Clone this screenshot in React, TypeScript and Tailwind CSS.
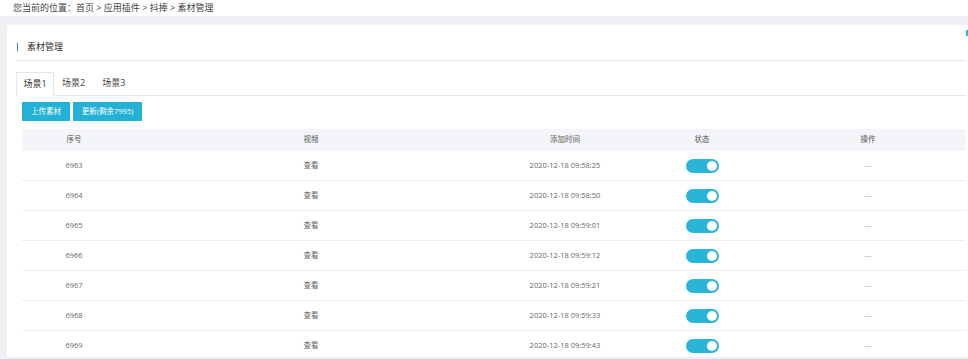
import React from 'react';

const rows = [
  { id: 6963, time: '2020-12-18 09:58:25' },
  { id: 6964, time: '2020-12-18 09:58:50' },
  { id: 6965, time: '2020-12-18 09:59:01' },
  { id: 6966, time: '2020-12-18 09:59:12' },
  { id: 6967, time: '2020-12-18 09:59:21' },
  { id: 6968, time: '2020-12-18 09:59:33' },
  { id: 6969, time: '2020-12-18 09:59:43' },
];

const cols = 'grid grid-cols-[104px_370px_138px_136px_1fr] items-center text-center';

const Toggle: React.FC = () => (
  <span className="inline-flex items-center justify-end w-[33px] h-[14px] rounded-full bg-[#29b5d8] pr-[2px]">
    <span className="w-[10px] h-[10px] rounded-full bg-white" />
  </span>
);

export default function App() {
  return (
    <div
      className="w-[968px] h-[359px] overflow-hidden bg-[#eef0f4]"
      style={{ fontFamily: '"Open Sans", "Noto Sans CJK SC", sans-serif' }}
    >
      <div className="h-4 bg-white px-[13px] text-[9px] leading-4 text-[#444]">
        您当前的位置：首页 &gt; 应用插件 &gt; 抖捧 &gt; 素材管理
      </div>

      <div className="relative ml-[7px] mt-[9px] h-[332px] overflow-hidden bg-white pl-[9px] pr-[2px]">
        <span className="absolute right-0 top-[5px] h-[6px] w-[2px] bg-[#29b5d8]" />

        <div className="flex h-[36px] items-center border-b border-[#e6e6e6] pt-[9px]">
          <span className="ml-[1px] h-[8px] w-[1px] bg-[#3a8ac4]" />
          <span className="ml-[9px] text-[9px] text-[#333]">素材管理</span>
        </div>

        <div className="mt-[11px] flex h-[24px] items-end border-b border-[#e6e6e6] text-[9px] text-[#444]">
          <div className="-mb-px flex h-[24px] w-[38px] items-center justify-center border border-b-white border-[#e6e6e6] bg-white text-[#333]">
            场景1
          </div>
          <div className="flex h-[24px] items-center pl-[8px]">场景2</div>
          <div className="flex h-[24px] items-center pl-[17px]">场景3</div>
        </div>

        <div className="ml-[6px] mt-[6px] flex gap-[3px] text-[7.5px] text-white">
          <button className="h-[19px] w-[48px] bg-[#23b2d6]">上传素材</button>
          <button className="h-[19px] w-[69px] bg-[#23b2d6]">更新(剩余7995)</button>
        </div>

        <div className="ml-[6px] mt-[8px] text-[7.5px] text-[#666]">
          <div className={`${cols} h-[22px] bg-[#f4f5f8] text-[#555]`}>
            <span>序号</span>
            <span>视频</span>
            <span>添加时间</span>
            <span>状态</span>
            <span>操作</span>
          </div>
          {rows.map((r) => (
            <div key={r.id} className={`${cols} h-[30px] border-b border-[#ebedf0]`}>
              <span>{r.id}</span>
              <span>查看</span>
              <span>{r.time}</span>
              <span className="flex justify-center">
                <Toggle />
              </span>
              <span className="text-[#999]">---</span>
            </div>
          ))}
        </div>
      </div>
    </div>
  );
}
